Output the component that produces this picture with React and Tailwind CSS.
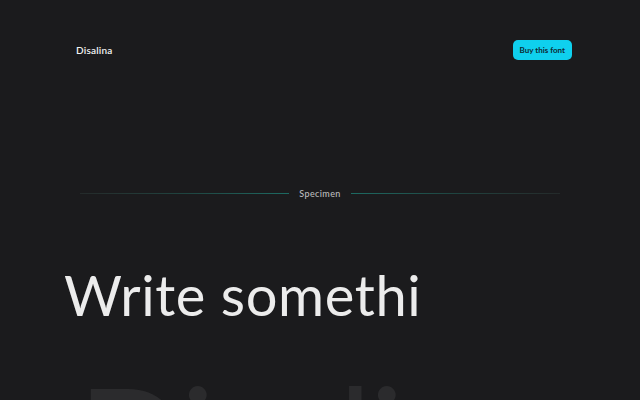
export default function App() {
  return (
    <div className="h-[400px] w-full overflow-hidden bg-[#1b1b1d] font-['Lato',sans-serif]">
      {/* Top bar */}
      <header className="flex items-center justify-between pl-[76px] pr-[68px] pt-[40px]">
        <span className="text-[10px] font-semibold tracking-[0.2px] text-[#f2f2f2]">Disalina</span>
        <button className="h-[20px] rounded-[5px] bg-[#0fd0ee] px-[7px] text-[8px] font-bold text-[#0e2a33]">
          Buy this font
        </button>
      </header>

      {/* Section divider */}
      <div className="mt-[127px] flex items-center gap-[10px] px-[80px]">
        <div className="h-px flex-1 bg-gradient-to-r from-[#242a2a] via-[#1f4440] to-[#1c6a62]" />
        <span className="text-[9px] font-medium tracking-[0.4px] text-[#bdbdbd]">Specimen</span>
        <div className="h-px flex-1 bg-gradient-to-r from-[#1c6a62] via-[#1f4440] to-[#242a2a]" />
      </div>

      {/* Type tester */}
      <div className="mt-[62px] pl-[64px]">
        <p className="whitespace-nowrap text-[56px] leading-[64px] tracking-[0.6px] text-[#ececec]">Write somethi</p>
      </div>

      {/* Big name */}
      <div className="mt-[38px] pl-[78px]">
        <p className="whitespace-nowrap text-[140px] leading-[140px] tracking-[-2px] text-[#2b2b2d]">Disalina</p>
      </div>
    </div>
  );
}
